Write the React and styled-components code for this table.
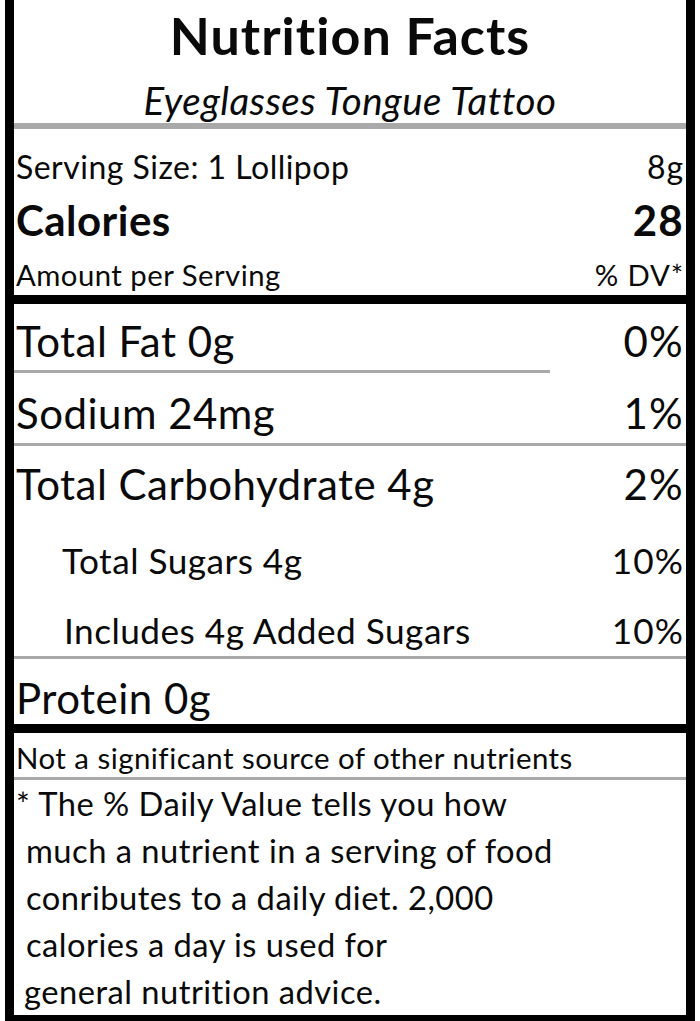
import React from 'react';
import styled, { createGlobalStyle } from 'styled-components';

const Global = createGlobalStyle`
    html, body {
        margin: 0;
        padding: 0;
        background: #fff;
    }
    body {
        font-family: Lato, "Open Sans", sans-serif;
        color: #0a0a0a;
        letter-spacing: 0.03em;
    }
`

const Label = styled.div`
    width: 690px;
    margin-left: 5px;
    box-sizing: border-box;
    border-left: 9px solid #000;
    border-right: 9px solid #000;
    border-bottom: 8px solid #000;
    display: flex;
    flex-direction: column;
`

const Title = styled.h1`
    margin: 0;
    height: 70px;
    display: flex;
    align-items: center;
    justify-content: center;
    font-size: 52px;
    font-weight: 700;
    letter-spacing: 0.02em;
`

const Subtitle = styled.div`
    height: 53px;
    padding-top: 7px;
    box-sizing: border-box;
    display: flex;
    align-items: center;
    justify-content: center;
    font-size: 38.5px;
    font-style: italic;
`

const Rule = styled.div`
    height: ${({ size }) => size}px;
    width: ${({ width }) => width || '100%'};
    background: ${({ dark }) => dark ? '#000' : '#a9a9a9'};
    flex-shrink: 0;
`

const Row = styled.div`
    height: ${({ h }) => h}px;
    padding: ${({ pt }) => pt || 0}px 2px 0 ${({ indent }) => 2 + (indent || 0)}px;
    box-sizing: border-box;
    display: flex;
    align-items: center;
    justify-content: space-between;
    font-size: ${({ fs }) => fs}px;
    font-weight: ${({ bold }) => bold ? 700 : 400};
    white-space: nowrap;
`

const Value = styled.span`
    text-align: right;
    letter-spacing: 0.03em;
`

const Footnote = styled.div`
    display: flex;
    flex-direction: column;
    font-size: 32.7px;
    line-height: 47px;
`

const FootLine = styled.div`
    padding-left: ${({ indent }) => 2 + (indent || 0)}px;
    white-space: nowrap;
`

const nutrients = [
    { name: 'Total Fat 0g', dv: '0%', h: 66, pt: 8, fs: 42 },
    { rule: 'partial' },
    { name: 'Sodium 24mg', dv: '1%', h: 70, pt: 10, fs: 42 },
    { rule: 'full' },
    { name: 'Total Carbohydrate 4g', dv: '2%', h: 76, fs: 42 },
    { name: 'Total Sugars 4g', dv: '10%', h: 76, fs: 35.2, indent: 46 },
    { name: 'Includes 4g Added Sugars', dv: '10%', h: 58, pt: 6, fs: 35.2, indent: 48 },
    { rule: 'full' },
    { name: 'Protein 0g', dv: '', h: 65, pt: 13, fs: 42 },
]

export default function App() {
    return (
        <>
            <Global />
            <Label>
                <Title>Nutrition Facts</Title>
                <Subtitle>Eyeglasses Tongue Tattoo</Subtitle>
                <Rule size={6} />

                <Row h={64} pt={10} fs={32}>
                    <span>Serving Size: 1 Lollipop</span>
                    <Value>8g</Value>
                </Row>
                <Row h={53} fs={42} bold>
                    <span>Calories</span>
                    <Value>28</Value>
                </Row>
                <Row h={49} pt={8} fs={29.3}>
                    <span>Amount per Serving</span>
                    <Value>% DV*</Value>
                </Row>
                <Rule size={9} dark />

                {nutrients.map((n, i) => n.rule ?
                    <Rule key={i} size={3} width={n.rule === 'partial' ? '536px' : '100%'} />
                    :
                    <Row key={i} h={n.h} pt={n.pt} fs={n.fs} indent={n.indent}>
                        <span>{n.name}</span>
                        <Value>{n.dv}</Value>
                    </Row>
                )}
                <Rule size={9} dark />

                <Row h={44} pt={4} fs={29.4}>
                    <span>Not a significant source of other nutrients</span>
                </Row>
                <Rule size={3} />

                <Footnote>
                    <FootLine>* The % Daily Value tells you how</FootLine>
                    <FootLine indent={10}>much a nutrient in a serving of food</FootLine>
                    <FootLine indent={10}>conributes to a daily diet. 2,000</FootLine>
                    <FootLine indent={10}>calories a day is used for</FootLine>
                    <FootLine indent={8}>general nutrition advice.</FootLine>
                </Footnote>
            </Label>
        </>
    )
}
